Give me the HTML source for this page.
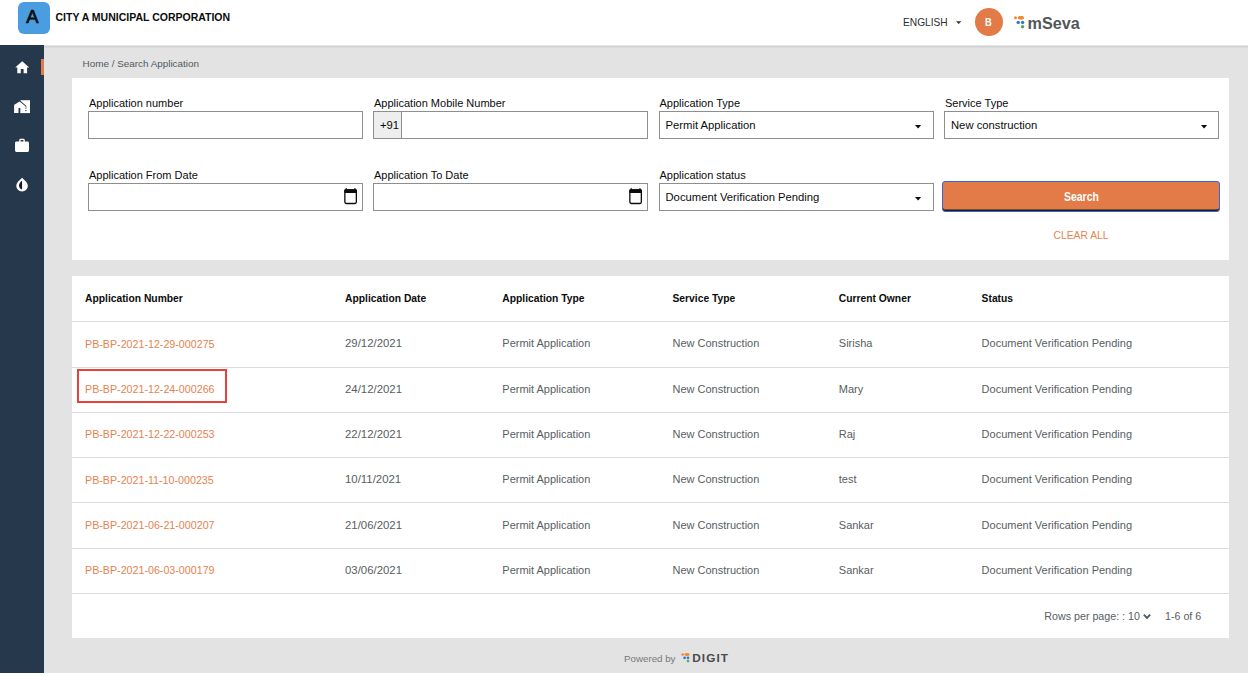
<!DOCTYPE html>
<html><head><meta charset="utf-8">
<style>
*{box-sizing:border-box;margin:0;padding:0}
html,body{width:1250px;height:676px;overflow:hidden;background:#fff;font-family:"Liberation Sans",sans-serif;}
.a{position:absolute;white-space:nowrap;line-height:normal}
#hdr{position:absolute;left:0;top:0;width:1250px;height:45px;background:#fff;z-index:3}
#side{position:absolute;left:0;top:45px;width:44px;height:628px;background:#26384b;z-index:4}
#main{position:absolute;left:44px;top:45px;width:1204px;height:628px;background:#e3e3e3}
.card{position:absolute;background:#fff}
.lbl{font-size:11px;color:#0b0c0c}
.inp{position:absolute;border:1px solid #8e8e8e;background:#fff;height:28px}
.val{font-size:11.25px;color:#0b0c0c}
.th{font-size:10.3px;font-weight:bold;color:#0b0c0c}
.td{font-size:11px;color:#575e62}
.lnk{font-size:10.7px;color:#e5834f}
.rl{position:absolute;left:72px;width:1157px;height:1px;background:#dcdcdc}
.caret{position:absolute;width:0;height:0;border-left:3px solid transparent;border-right:3px solid transparent;border-top:3.5px solid #0b0c0c}
</style></head><body>
<div id="hdr">
  <div style="position:absolute;left:17.5px;top:1.7px;width:32px;height:32px;background:#4a9de1;border-radius:6px"></div>
  <div class="a" style="left:26.2px;top:5.8px;font-size:18.4px;color:#0b0c0c;-webkit-text-stroke:0.7px #0b0c0c">A</div>
  <div class="a" style="left:55.5px;top:11.2px;font-size:10.5px;font-weight:bold;color:#0b0c0c">CITY A MUNICIPAL CORPORATION</div>
  <div class="a" style="left:903px;top:16.7px;font-size:10.2px;color:#2c3033">ENGLISH</div>
  <svg style="position:absolute;left:955.5px;top:20.5px" width="6" height="4" viewBox="0 0 6 4"><path d="M0 0.3H5.4L2.7 3.1Z" fill="#333"/></svg>
  <div style="position:absolute;left:975px;top:7.5px;width:28px;height:28px;border-radius:50%;background:#e27b47"></div>
  <div class="a" style="left:985.3px;top:15.8px;font-size:11.4px;font-weight:bold;color:#fff;transform:scaleX(0.82);transform-origin:left top">B</div>
  <svg style="position:absolute;left:1010px;top:12px" width="18" height="18" viewBox="0 0 18 18">
    <circle cx="5.5" cy="5.8" r="1.5" fill="#ef8a34"/>
    <circle cx="9.5" cy="5.8" r="1.7" fill="#ef8a34"/><circle cx="12.3" cy="5.8" r="1.7" fill="#ef8a34"/><rect x="9.5" y="4.1" width="2.8" height="3.4" fill="#ef8a34"/>
    <circle cx="8.2" cy="10.4" r="1.7" fill="#2f78c8"/><circle cx="12.6" cy="10.4" r="1.7" fill="#2f78c8"/>
    <circle cx="12.6" cy="14.8" r="1.7" fill="#4cae4f"/>
  </svg>
  <div class="a" style="left:1027.5px;top:13.8px;font-size:16.2px;font-weight:bold;color:#525659">mSeva</div>
</div>

<div id="side">

  <svg style="position:absolute;left:0;top:0" width="44" height="200" viewBox="0 0 44 200">
    <g transform="translate(13.8,14.2) scale(0.7)"><path d="M10 20v-6h4v6h5v-8h3L12 3 2 12h3v8z" fill="#fff"/></g>
    <g>
      <rect x="20.4" y="55.2" width="9.6" height="12.9" fill="#fff"/>
      <path d="M19.4 55.6 L26.3 61.6" fill="none" stroke="#26384b" stroke-width="1.2"/>
      <path d="M14.1 60.6 Q14.1 59.9 14.7 59.5 L19.5 56.5 L25.2 61.3 L25.2 68.1 L14.1 68.1 Z" fill="#fff"/>
      <rect x="18.5" y="63" width="1.8" height="5.1" fill="#26384b"/>
      <rect x="25.2" y="62.6" width="1.4" height="0.9" fill="#26384b"/>
      <rect x="25.2" y="65.2" width="1.4" height="0.9" fill="#26384b"/>
    </g>
    <g transform="translate(13.6,92.3) scale(0.7)"><path d="M20 6h-4V4c0-1.11-.89-2-2-2h-4c-1.11 0-2 .89-2 2v2H4c-1.11 0-1.99.89-1.99 2L2 19c0 1.11.89 2 2 2h16c1.11 0 2-.89 2-2V8c0-1.11-.89-2-2-2zm-6 0h-4V4h4v2z" fill="#fff"/></g>
    <g transform="translate(13.4,131) scale(0.72)"><path d="M17.66 7.93L12 2.27 6.34 7.93c-3.12 3.12-3.12 8.19 0 11.31C7.9 20.8 9.95 21.58 12 21.58c2.05 0 4.1-.78 5.66-2.34 3.12-3.12 3.12-8.19 0-11.31z" fill="#fff"/><path d="M12 6.2 C9.4 8.6 7.8 10.6 7.8 13.3 C7.8 16.4 9.8 18.5 12 18.8 Z" fill="#151a30"/></g>
  </svg>
  <div style="position:absolute;left:41px;top:14px;width:3px;height:16px;background:#e27b47"></div>
</div>

<div id="main"></div>
<div style="position:absolute;left:44px;top:44.5px;width:1204px;height:3.5px;background:linear-gradient(#f0f0f0,#cbcbcb 60%,#e3e3e3);z-index:3"></div>

<!-- breadcrumb -->
<div class="a" style="left:82.6px;top:57.7px;font-size:9.9px;color:#505a5f;z-index:1">Home / Search Application</div>

<!-- search card -->
<div class="card" style="left:72px;top:78px;width:1157px;height:182px"></div>
<div class="a lbl" style="left:89px;top:97px">Application number</div>
<div class="inp" style="left:88px;top:111px;width:275px"></div>
<div class="a lbl" style="left:89px;top:169px">Application From Date</div>
<div class="inp" style="left:88px;top:183px;width:275px"></div>
<div class="a lbl" style="left:374px;top:97px">Application Mobile Number</div>
<div class="inp" style="left:373px;top:111px;width:275px"></div>
<div class="a lbl" style="left:374px;top:169px">Application To Date</div>
<div class="inp" style="left:373px;top:183px;width:275px"></div>
<div class="a lbl" style="left:659.5px;top:97px">Application Type</div>
<div class="inp" style="left:658.5px;top:111px;width:275px"></div>
<div class="a lbl" style="left:659.5px;top:169px">Application status</div>
<div class="inp" style="left:658.5px;top:183px;width:275px"></div>
<div class="a lbl" style="left:945px;top:97px">Service Type</div>
<div class="inp" style="left:944px;top:111px;width:275px"></div>
<div style="position:absolute;left:374px;top:112px;width:28px;height:26px;background:#eeeeee;border-right:1px solid #8e8e8e"></div>
<div class="a val" style="left:380px;top:119px">+91</div>
<div class="a val" style="left:665.5px;top:118.6px">Permit Application</div>
<div class="a val" style="left:951px;top:118.6px">New construction</div>
<div class="a val" style="left:665.5px;top:190.6px">Document Verification Pending</div>
<svg style="position:absolute;left:915.0px;top:124.7px" width="7" height="4" viewBox="0 0 7 4"><path d="M0 0H6.2L3.1 3.4Z" fill="#0b0c0c"/></svg>
<svg style="position:absolute;left:1200.5px;top:124.7px" width="7" height="4" viewBox="0 0 7 4"><path d="M0 0H6.2L3.1 3.4Z" fill="#0b0c0c"/></svg>
<svg style="position:absolute;left:915.0px;top:196.7px" width="7" height="4" viewBox="0 0 7 4"><path d="M0 0H6.2L3.1 3.4Z" fill="#0b0c0c"/></svg>
<svg style="position:absolute;left:344px;top:187px" width="14" height="18" viewBox="0 0 14 18"><rect x="0.85" y="2.9" width="11.5" height="13.6" rx="1.4" fill="none" stroke="#0b0c0c" stroke-width="1.3"/><rect x="0.3" y="2.3" width="12.6" height="3.6" fill="#0b0c0c" rx="1"/><rect x="1.6" y="1.2" width="1.3" height="1.6" fill="#0b0c0c"/><rect x="10.3" y="1.2" width="1.3" height="1.6" fill="#0b0c0c"/></svg>
<svg style="position:absolute;left:629px;top:187px" width="14" height="18" viewBox="0 0 14 18"><rect x="0.85" y="2.9" width="11.5" height="13.6" rx="1.4" fill="none" stroke="#0b0c0c" stroke-width="1.3"/><rect x="0.3" y="2.3" width="12.6" height="3.6" fill="#0b0c0c" rx="1"/><rect x="1.6" y="1.2" width="1.3" height="1.6" fill="#0b0c0c"/><rect x="10.3" y="1.2" width="1.3" height="1.6" fill="#0b0c0c"/></svg>
<div style="position:absolute;left:942.3px;top:181px;width:277.8px;height:30.9px;border:1.7px solid #3566d6;border-radius:3px;background:#e27b47;box-shadow:inset 0 -1.6px 0 #1a1a1a"></div>
<div class="a" style="left:1063.5px;top:190.2px;font-size:12.6px;font-weight:bold;color:#fff;transform:scaleX(0.83);transform-origin:left top">Search</div>
<div class="a" style="left:1053.5px;top:229.5px;font-size:10.3px;color:#e5834f">CLEAR ALL</div>
<!-- table card -->
<div class="card" style="left:72px;top:276px;width:1157px;height:362px"></div>

<div class="a th" style="left:85px;top:293.3px">Application Number</div>
<div class="a th" style="left:345px;top:293.3px">Application Date</div>
<div class="a th" style="left:502.3px;top:293.3px">Application Type</div>
<div class="a th" style="left:672.5px;top:293.3px">Service Type</div>
<div class="a th" style="left:838.8px;top:293.3px">Current Owner</div>
<div class="a th" style="left:981.6px;top:293.3px">Status</div>
<div class="rl" style="top:321px"></div>
<div class="rl" style="top:366.5px"></div>
<div class="rl" style="top:411.8px"></div>
<div class="rl" style="top:457px"></div>
<div class="rl" style="top:502.2px"></div>
<div class="rl" style="top:547.5px"></div>
<div class="rl" style="top:593px"></div>
<div class="a lnk" style="left:85px;top:337.62px">PB-BP-2021-12-29-000275</div>
<div class="a td" style="left:345px;top:337.35px;font-size:11.4px">29/12/2021</div>
<div class="a td" style="left:502.3px;top:337.35px">Permit Application</div>
<div class="a td" style="left:672.5px;top:337.35px">New Construction</div>
<div class="a td" style="left:838.8px;top:337.35px">Sirisha</div>
<div class="a td" style="left:981.6px;top:337.35px">Document Verification Pending</div>
<div class="a lnk" style="left:85px;top:382.82px">PB-BP-2021-12-24-000266</div>
<div class="a td" style="left:345px;top:382.55px;font-size:11.4px">24/12/2021</div>
<div class="a td" style="left:502.3px;top:382.55px">Permit Application</div>
<div class="a td" style="left:672.5px;top:382.55px">New Construction</div>
<div class="a td" style="left:838.8px;top:382.55px">Mary</div>
<div class="a td" style="left:981.6px;top:382.55px">Document Verification Pending</div>
<div class="a lnk" style="left:85px;top:428.42px">PB-BP-2021-12-22-000253</div>
<div class="a td" style="left:345px;top:428.15px;font-size:11.4px">22/12/2021</div>
<div class="a td" style="left:502.3px;top:428.15px">Permit Application</div>
<div class="a td" style="left:672.5px;top:428.15px">New Construction</div>
<div class="a td" style="left:838.8px;top:428.15px">Raj</div>
<div class="a td" style="left:981.6px;top:428.15px">Document Verification Pending</div>
<div class="a lnk" style="left:85px;top:473.62px">PB-BP-2021-11-10-000235</div>
<div class="a td" style="left:345px;top:473.35px;font-size:11.4px">10/11/2021</div>
<div class="a td" style="left:502.3px;top:473.35px">Permit Application</div>
<div class="a td" style="left:672.5px;top:473.35px">New Construction</div>
<div class="a td" style="left:838.8px;top:473.35px">test</div>
<div class="a td" style="left:981.6px;top:473.35px">Document Verification Pending</div>
<div class="a lnk" style="left:85px;top:518.92px">PB-BP-2021-06-21-000207</div>
<div class="a td" style="left:345px;top:518.64px;font-size:11.4px">21/06/2021</div>
<div class="a td" style="left:502.3px;top:518.64px">Permit Application</div>
<div class="a td" style="left:672.5px;top:518.64px">New Construction</div>
<div class="a td" style="left:838.8px;top:518.64px">Sankar</div>
<div class="a td" style="left:981.6px;top:518.64px">Document Verification Pending</div>
<div class="a lnk" style="left:85px;top:564.12px">PB-BP-2021-06-03-000179</div>
<div class="a td" style="left:345px;top:563.84px;font-size:11.4px">03/06/2021</div>
<div class="a td" style="left:502.3px;top:563.84px">Permit Application</div>
<div class="a td" style="left:672.5px;top:563.84px">New Construction</div>
<div class="a td" style="left:838.8px;top:563.84px">Sankar</div>
<div class="a td" style="left:981.6px;top:563.84px">Document Verification Pending</div>
<div style="position:absolute;left:77.3px;top:368.8px;width:149.9px;height:34.3px;border:2px solid #e4433a"></div>
<div class="a td" style="left:1044.3px;top:609.90px;font-size:10.7px">Rows per page: : 10</div>
<svg style="position:absolute;left:1143px;top:612.5px" width="8" height="7" viewBox="0 0 8 7"><path d="M0.8 1.6 L4 4.8 L7.2 1.6" fill="none" stroke="#505a5f" stroke-width="1.9"/></svg>
<div class="a td" style="left:1165px;top:609.90px;font-size:10.7px">1-6 of 6</div>
<!-- footer -->
<div class="a" style="left:624px;top:652.8px;font-size:9.75px;color:#787878">Powered by</div>
<svg style="position:absolute;left:678px;top:650px" width="14" height="14" viewBox="0 0 14 14">
  <circle cx="4.7" cy="4.5" r="1.35" fill="#ef8a34"/><circle cx="7.9" cy="4.5" r="1.35" fill="#ef8a34"/><circle cx="10.2" cy="4.5" r="1.35" fill="#ef8a34"/><rect x="7.9" y="3.15" width="2.3" height="2.7" fill="#ef8a34"/>
  <circle cx="6.6" cy="7.8" r="1.35" fill="#2f78c8"/><circle cx="10" cy="7.8" r="1.35" fill="#2f78c8"/>
  <circle cx="10" cy="11" r="1.35" fill="#4cae4f"/>
</svg>
<div class="a" style="left:692.3px;top:650.6px;font-size:11.8px;font-weight:bold;color:#4a4a4a;letter-spacing:1.05px">DIGIT</div>

<div style="position:absolute;left:1248px;top:0;width:2px;height:676px;background:#fff;z-index:5"></div>
<div style="position:absolute;left:0;top:673px;width:1250px;height:3px;background:#fff;z-index:5"></div>
</body></html>
